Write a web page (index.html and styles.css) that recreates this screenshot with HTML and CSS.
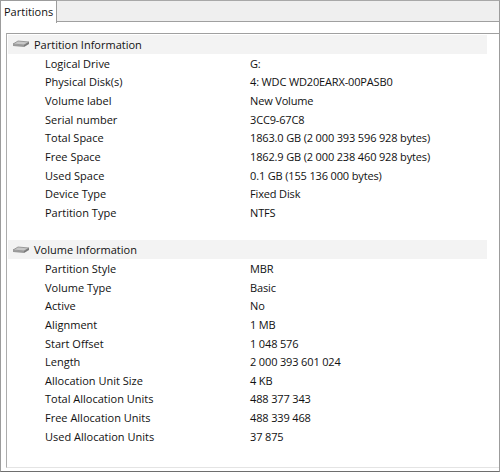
FILE: index.html
```html
<!DOCTYPE html>
<html>
<head>
<meta charset="utf-8">
<link rel="stylesheet" href="styles.css">
</head>
<body>
<div class="window">
  <div class="tabstrip">
    <div class="tab">Partitions</div>
    <div class="tabfill"></div>
  </div>
  <div class="page">
    <div class="list">
      <div class="group">
        <svg class="icon" width="18" height="10" viewBox="0 0 18 10">
          <path d="M1 5 L6 2 L17 3 L12 6 Z" fill="#c8c8c8" stroke="#8a8a8a" stroke-width="0.8"/>
          <path d="M1 5 L12 6 L12 8 L1 7 Z" fill="#9a9a9a"/>
          <path d="M12 6 L17 3 L17 5 L12 8 Z" fill="#7a7a7a"/>
        </svg>
        <span>Partition Information</span>
      </div>
      <div class="row"><span class="k">Logical Drive</span><span class="v">G:</span></div>
      <div class="row"><span class="k">Physical Disk(s)</span><span class="v">4: WDC WD20EARX-00PASB0</span></div>
      <div class="row"><span class="k">Volume label</span><span class="v">New Volume</span></div>
      <div class="row"><span class="k">Serial number</span><span class="v">3CC9-67C8</span></div>
      <div class="row"><span class="k">Total Space</span><span class="v">1863.0 GB (2 000 393 596 928 bytes)</span></div>
      <div class="row"><span class="k">Free Space</span><span class="v">1862.9 GB (2 000 238 460 928 bytes)</span></div>
      <div class="row"><span class="k">Used Space</span><span class="v">0.1 GB (155 136 000 bytes)</span></div>
      <div class="row"><span class="k">Device Type</span><span class="v">Fixed Disk</span></div>
      <div class="row"><span class="k">Partition Type</span><span class="v">NTFS</span></div>
      <div class="row"></div>
      <div class="group">
        <svg class="icon" width="18" height="10" viewBox="0 0 18 10">
          <path d="M1 5 L6 2 L17 3 L12 6 Z" fill="#c8c8c8" stroke="#8a8a8a" stroke-width="0.8"/>
          <path d="M1 5 L12 6 L12 8 L1 7 Z" fill="#9a9a9a"/>
          <path d="M12 6 L17 3 L17 5 L12 8 Z" fill="#7a7a7a"/>
        </svg>
        <span>Volume Information</span>
      </div>
      <div class="row"><span class="k">Partition Style</span><span class="v">MBR</span></div>
      <div class="row"><span class="k">Volume Type</span><span class="v">Basic</span></div>
      <div class="row"><span class="k">Active</span><span class="v">No</span></div>
      <div class="row"><span class="k">Alignment</span><span class="v">1 MB</span></div>
      <div class="row"><span class="k">Start Offset</span><span class="v">1 048 576</span></div>
      <div class="row"><span class="k">Length</span><span class="v">2 000 393 601 024</span></div>
      <div class="row"><span class="k">Allocation Unit Size</span><span class="v">4 KB</span></div>
      <div class="row"><span class="k">Total Allocation Units</span><span class="v">488 377 343</span></div>
      <div class="row"><span class="k">Free Allocation Units</span><span class="v">488 339 468</span></div>
      <div class="row"><span class="k">Used Allocation Units</span><span class="v">37 875</span></div>
    </div>
  </div>
</div>
</body>
</html>
```
FILE: styles.css
```css
html, body {
  margin: 0;
  padding: 0;
  background: #ffffff;
}
body {
  width: 500px;
  height: 472px;
  overflow: hidden;
  font-family: "Open Sans", "Noto Sans", sans-serif;
  font-size: 11px;
  color: #111111;
}
.window {
  display: flex;
  flex-direction: column;
  width: 500px;
  height: 472px;
}
.tabstrip {
  display: flex;
  height: 22px;
  flex: none;
}
.tab {
  width: 57px;
  height: 23px;
  box-sizing: border-box;
  border: 1px solid #9c9c9c;
  border-bottom: none;
  background: #ffffff;
  padding-left: 3px;
  line-height: 22px;
  position: relative;
  z-index: 1;
}
.tabfill {
  flex: 1;
  box-sizing: border-box;
  border-top: 1px solid #a8a8a8;
  border-right: 1px solid #9c9c9c;
  border-bottom: 1px solid #a0a0a0;
  background: #efefef;
}
.page {
  flex: 1;
  box-sizing: border-box;
  border-left: 1px solid #9c9c9c;
  border-right: 1px solid #9c9c9c;
  border-bottom: 1px solid #6e6e6e;
  padding: 11px 0 3px 5px;
  display: flex;
}
.list {
  flex: 1;
  box-sizing: border-box;
  border-top: 1px solid #a0a0a0;
  border-left: 1px solid #acacac;
  border-bottom: 1px solid #e4e4e4;
  padding-top: 1px;
}
.group {
  display: flex;
  align-items: center;
  height: 18.67px;
  margin-left: 1px;
  width: 479px;
  background: #f3f3f3;
}
.icon {
  margin-left: 4px;
  margin-right: 4px;
  flex: none;
}
.row {
  display: grid;
  grid-template-columns: 243px 1fr;
  height: 18.67px;
  line-height: 18.67px;
  padding-top: 1px;
  box-sizing: border-box;
  white-space: nowrap;
}
.k {
  padding-left: 38px;
}
.v {
  letter-spacing: -0.15px;
}
```
